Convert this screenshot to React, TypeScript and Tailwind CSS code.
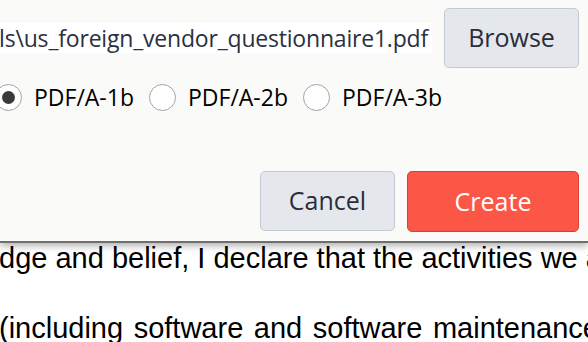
import { useState } from 'react';

const formats = ['PDF/A-1b', 'PDF/A-2b', 'PDF/A-3b'];

const App = () => {
  const [format, setFormat] = useState('PDF/A-1b');

  return (
    <div className="relative w-[588px] h-[342px] overflow-hidden bg-white">
      {/* document behind the dialog */}
      <div className="pt-[224px] text-[29px] leading-[69.5px] text-black whitespace-nowrap font-['Liberation_Sans',Arial,sans-serif]">
        <p className="-ml-[1px]">dge and belief, I declare that the activities we are</p>
        <p className="-ml-[1px] [word-spacing:2.5px]">(including software and software maintenance</p>
      </div>

      {/* dialog */}
      <div className="absolute inset-x-0 top-0 h-[243px] bg-[#fafaf9] border-b-2 border-[#6f6f6f] shadow-[0_3px_7px_rgba(0,0,0,0.3)] pr-[9px] font-['Open_Sans','Noto_Sans',sans-serif]">
        <div className="flex items-center gap-3 mt-2 h-[60px]">
          <div className="flex-1 h-[30px] bg-white overflow-hidden flex justify-end items-center pr-1">
            <span className="whitespace-nowrap text-[23px] text-[#2b3040] tracking-[-0.2px]">
              C:\Users\admin\Documents\Vendor Materials\us_foreign_vendor_questionnaire1.pdf
            </span>
          </div>
          <button className="w-[135px] h-[60px] rounded-[5px] bg-[#e4e7ec] border border-[#c4c8cf] text-[25px] text-[#2b2d3b]">
            Browse
          </button>
        </div>

        <div className="flex items-center h-[30px] mt-[14px] -ml-[5px]">
          {formats.map((f) => (
            <label key={f} className="flex items-center mr-[15px] cursor-pointer" onClick={() => setFormat(f)}>
              <span className="w-[27px] h-[27px] rounded-full border border-[#a3a3a3] bg-white flex items-center justify-center">
                {format === f && <span className="w-[13px] h-[13px] rounded-full bg-[#3a3a3a]" />}
              </span>
              <span className="ml-3 text-[23px] text-black">{f}</span>
            </label>
          ))}
        </div>

        <div className="flex justify-end gap-3 mt-[59px]">
          <button className="w-[135px] h-[60px] rounded-[5px] bg-[#e4e7ec] border border-[#c4c8cf] text-[25px] text-[#2b2d3b]">
            Cancel
          </button>
          <button className="w-[172px] h-[61px] rounded-[5px] bg-[#fc5646] border border-[#d9412f] text-[25px] text-white">
            Create
          </button>
        </div>
      </div>
    </div>
  );
};

export default App;
